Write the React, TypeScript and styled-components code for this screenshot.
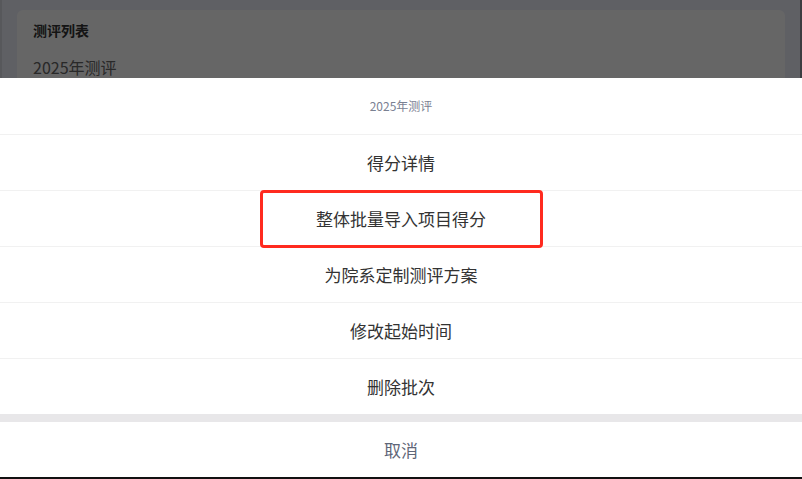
import React from "react";
import styled, { createGlobalStyle } from "styled-components";

const GlobalStyle = createGlobalStyle`
  html, body {
    margin: 0;
    padding: 0;
    overflow: hidden;
    background: #ffffff;
  }
  body {
    font-family: "Noto Sans CJK SC", "Noto Sans", sans-serif;
  }
  * { box-sizing: border-box; }
`;

const Page = styled.div`
  position: relative;
  width: 802px;
  height: 479px;
  display: flex;
  background: #edf0fa;
  overflow: hidden;
`;

const EdgeStrip = styled.div<{ $tone: string }>`
  width: 2px;
  flex: none;
  background: ${(p) => p.$tone};
`;

const Main = styled.div`
  flex: 1;
  padding: 10px 15px 0 15px;
`;

const Card = styled.div`
  background: #ffffff;
  border-radius: 6px;
  padding: 10px 16px;
  height: 300px;
  display: flex;
  flex-direction: column;
  gap: 16px;
`;

const CardTitle = styled.div`
  font-size: 14px;
  line-height: 20px;
  font-weight: 700;
  color: #333333;
`;

const CardItem = styled.div`
  font-size: 16px;
  line-height: 22px;
  color: #666666;
`;

const Mask = styled.div`
  position: absolute;
  inset: 0;
  background: rgba(0, 0, 0, 0.6);
`;

const Sheet = styled.div`
  position: absolute;
  left: 0;
  right: 0;
  bottom: 0;
  background: #ffffff;
  display: flex;
  flex-direction: column;
`;

const SheetTitle = styled.div`
  height: 56px;
  display: flex;
  align-items: center;
  justify-content: center;
  font-size: 12px;
  color: #7a8192;
  padding-bottom: 2px;
`;

const Option = styled.div`
  position: relative;
  height: 56px;
  border-top: 1px solid #f1f1f1;
  display: flex;
  align-items: center;
  justify-content: center;
  font-size: 17px;
  color: #333333;
`;

const Highlight = styled.div`
  position: absolute;
  z-index: 2;
  top: -1px;
  left: 50%;
  width: 283px;
  height: 58px;
  margin-left: -141px;
  border: 3px solid #ff2a1f;
  border-radius: 4px;
  pointer-events: none;
`;

const Gap = styled.div`
  height: 8px;
  background: #e8e7e9;
`;

const Cancel = styled.div`
  height: 55px;
  display: flex;
  align-items: center;
  justify-content: center;
  font-size: 17px;
  color: #5f6678;
`;

const BottomEdge = styled.div`
  height: 2px;
  background: #111111;
`;

const options = [
  "得分详情",
  "整体批量导入项目得分",
  "为院系定制测评方案",
  "修改起始时间",
  "删除批次",
];

export default function App() {
  return (
    <>
      <GlobalStyle />
      <Page>
        <EdgeStrip $tone="#d9dce3" />
        <Main>
          <Card>
            <CardTitle>测评列表</CardTitle>
            <CardItem>2025年测评</CardItem>
          </Card>
        </Main>
        <EdgeStrip $tone="#9698a2" />
        <Mask />
        <Sheet>
          <SheetTitle>2025年测评</SheetTitle>
          {options.map((o, i) => (
            <Option key={o}>
              {o}
              {i === 1 && <Highlight />}
            </Option>
          ))}
          <Gap />
          <Cancel>取消</Cancel>
          <BottomEdge />
        </Sheet>
      </Page>
    </>
  );
}
